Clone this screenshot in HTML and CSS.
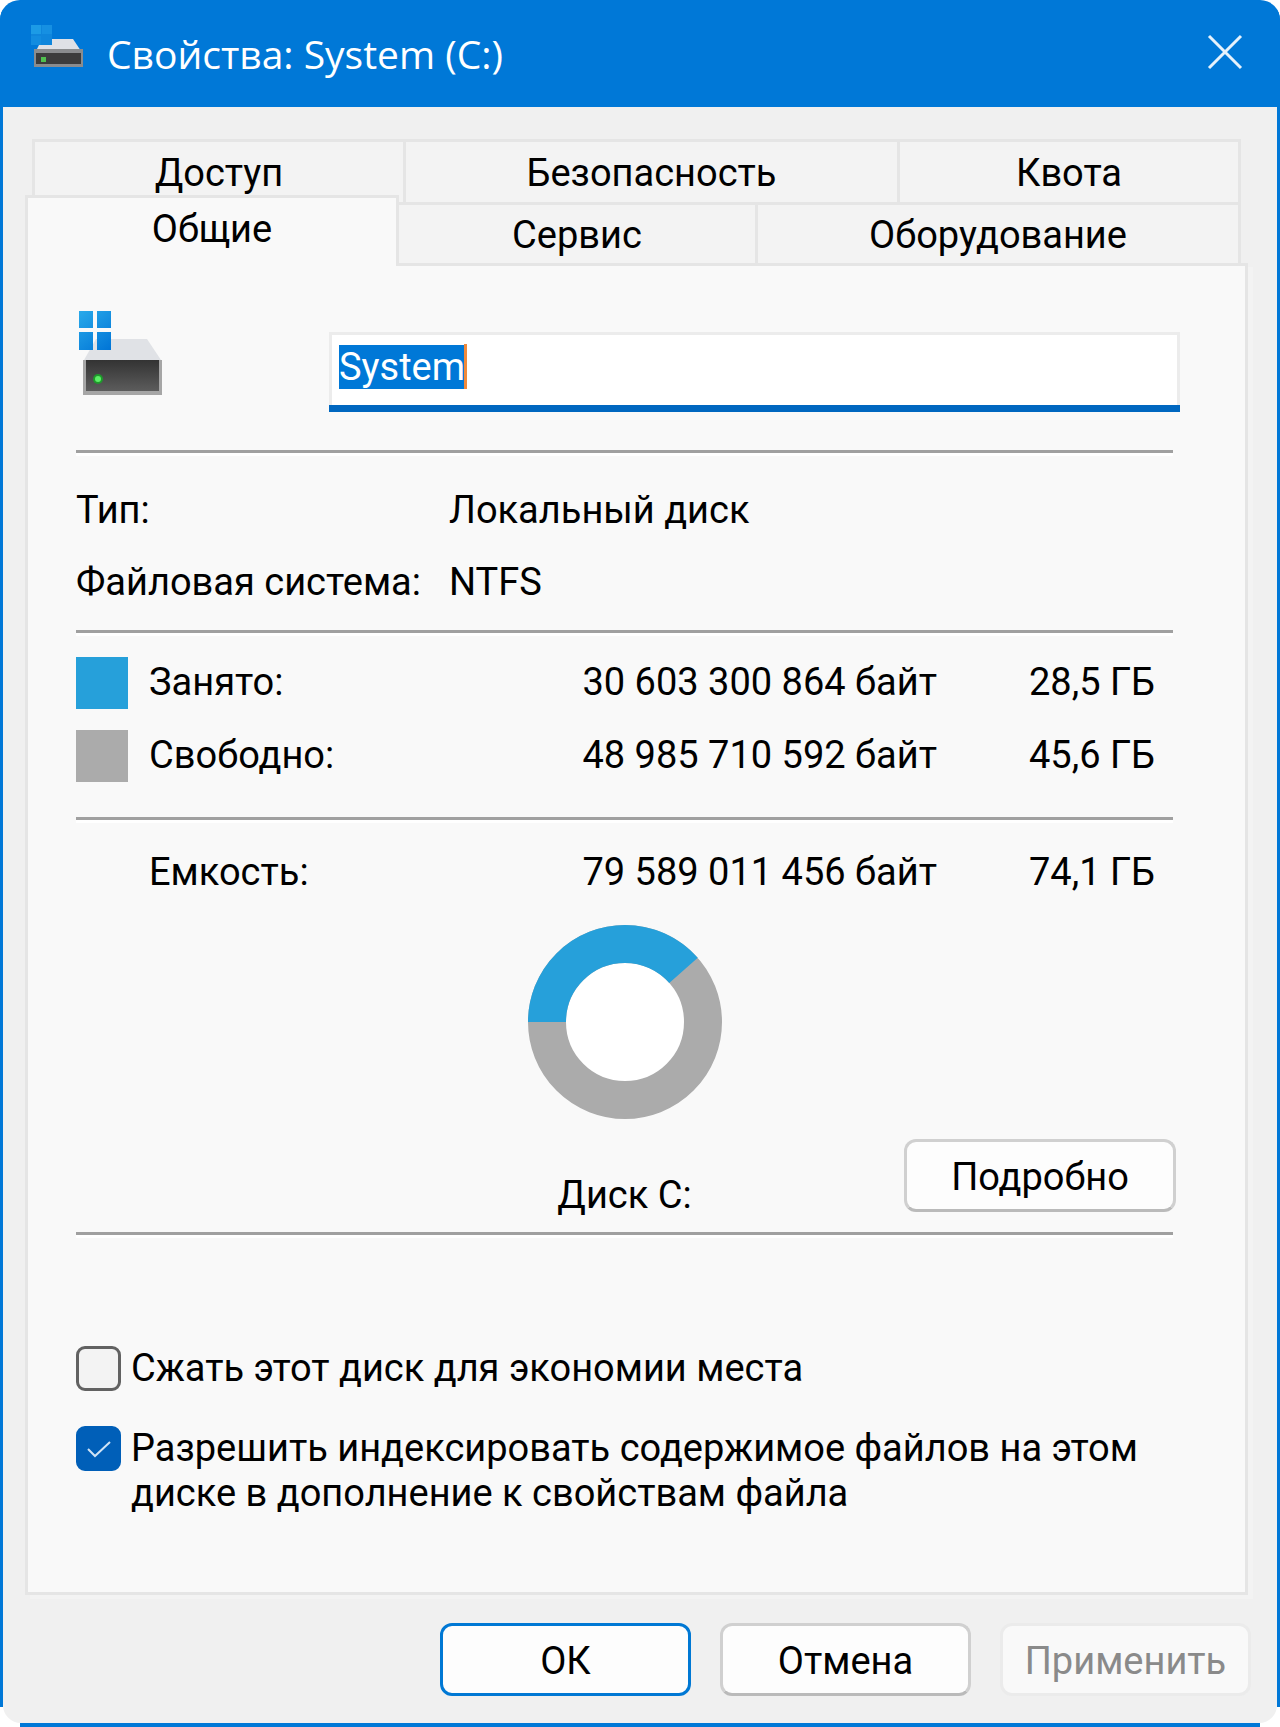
FILE: index.html
```html
<!DOCTYPE html>
<html lang="ru">
<head>
<meta charset="utf-8">
<title>Свойства: System (C:)</title>
<link rel="stylesheet" href="styles.css">
</head>

<body>
  <div class="window">
    <header class="titlebar">
      <svg class="titleIcon" viewBox="0 0 52 42">
        <path d="M11 14h31l8 12H5z" fill="#dfe1e6"/>
        <rect x="0" y="0" width="21" height="20" fill="#0f86dc"/>
        <rect x="0" y="0" width="10" height="9" fill="#1c9be6"/>
        <rect x="11" y="0" width="10" height="9" fill="#1690e2"/>
        <rect x="0" y="11" width="10" height="9" fill="#128ce0"/>
        <rect x="3" y="24" width="49" height="18" fill="#8a8c8e"/>
        <rect x="5" y="28" width="45" height="11" fill="#3c3c3c"/>
        <rect x="10" y="32" width="5" height="5" fill="#4fc04f"/>
      </svg>
      <h1>Свойства: System (C:)</h1>
      <button class="close" aria-label="Закрыть">
        <svg viewBox="0 0 36 36"><path d="M2 2L34 34M34 2L2 34"/></svg>
      </button>
    </header>

    <main class="client">
      <nav class="tabs">
        <div class="tabRow back">
          <button class="tab t1">Доступ</button>
          <button class="tab t2">Безопасность</button>
          <button class="tab t3">Квота</button>
        </div>
        <div class="tabRow front">
          <button class="tab active">Общие</button>
          <button class="tab t4">Сервис</button>
          <button class="tab t5">Оборудование</button>
        </div>
      </nav>

      <section class="panel">
        <div class="volume">
          <svg class="driveIcon" viewBox="0 0 86 84">
            <defs>
              <linearGradient id="win" x1="3" y1="0" x2="35" y2="39" gradientUnits="userSpaceOnUse">
                <stop offset="0" stop-color="#2aaaea"/>
                <stop offset="1" stop-color="#0074d6"/>
              </linearGradient>
              <linearGradient id="box" x1="0" y1="0" x2="0" y2="1">
                <stop offset="0" stop-color="#333"/>
                <stop offset="1" stop-color="#5c5c5c"/>
              </linearGradient>
            </defs>
            <path d="M20 28H71L85 49H8z" fill="#e0e2e6"/>
            <rect x="7" y="49" width="80" height="35" fill="#a6a6a6"/>
            <rect x="10" y="49" width="73" height="31" fill="url(#box)"/>
            <circle cx="22" cy="68" r="5" fill="#1f9a2c"/>
            <circle cx="22" cy="68" r="3" fill="#5cf066"/>
            <path d="M3 0h14v17h-14zM21 0h14v17h-14zM3 21h14v18h-14zM21 21h14v18h-14z" fill="url(#win)"/>
          </svg>
          <div class="nameBox">
            <input type="text" id="volumeName" value="System" aria-label="Метка тома" autofocus>
            <span class="caret"></span>
          </div>
        </div>

        <hr>

        <dl class="info">
          <dt>Тип:</dt><dd>Локальный диск</dd>
          <dt>Файловая система:</dt><dd>NTFS</dd>
        </dl>

        <hr>

        <table class="usage">
          <tr>
            <td class="key"><span class="swatch used"></span></td>
            <th>Занято:</th>
            <td>30 603 300 864 байт</td>
            <td class="gb">28,5 ГБ</td>
          </tr>
          <tr>
            <td class="key"><span class="swatch free"></span></td>
            <th>Свободно:</th>
            <td>48 985 710 592 байт</td>
            <td class="gb">45,6 ГБ</td>
          </tr>
        </table>

        <hr>

        <table class="capacity">
          <tr>
            <td class="key"></td>
            <th>Емкость:</th>
            <td>79 589 011 456 байт</td>
            <td class="gb">74,1 ГБ</td>
          </tr>
        </table>

        <!-- ring: used part starts at 9 o'clock and goes clockwise -->
        <svg class="ring" viewBox="0 0 196 196">
          <circle cx="98" cy="98" r="60" fill="#fff"/>
          <circle cx="98" cy="98" r="78" fill="none" stroke="#ababab" stroke-width="38"/>
          <circle cx="98" cy="98" r="78" fill="none" stroke="#26a0da" stroke-width="38" pathLength="1000" stroke-dasharray="385 615" transform="rotate(180 98 98)"/>
        </svg>

        <div class="diskRow">
          <span class="diskName">Диск C:</span>
          <button class="btn details">Подробно</button>
        </div>

        <hr>

        <div class="options">
          <label class="option">
            <input type="checkbox">
            <span>Сжать этот диск для экономии места</span>
          </label>
          <label class="option">
            <input type="checkbox" checked>
            <span>Разрешить индексировать содержимое файлов на этом<br>диске в дополнение к свойствам файла</span>
          </label>
        </div>
      </section>

      <footer class="buttons">
        <button class="btn default">ОК</button>
        <button class="btn">Отмена</button>
        <button class="btn" disabled>Применить</button>
      </footer>
    </main>
  </div>

<script>
  var field = document.getElementById("volumeName");
  field.focus();
  field.select();
</script>
</body>
</html>
```
FILE: styles.css
```css
* {
  box-sizing: border-box;
}

body {
  margin: 0;
  background: #fff;
  color: #000;
  font-family: Roboto, "Liberation Sans", sans-serif;
  font-size: 38px;
  line-height: 45px;
}

button, input {
  font: inherit;
  color: inherit;
  margin: 0;
}

/* the frame lines stop short of the rounded bottom corners */
.window {
  display: flex;
  flex-direction: column;
  min-height: 100vh;
  padding-bottom: 4px;
  background:
    linear-gradient(#0078d7, #0078d7) left top / 3px calc(100% - 20px) no-repeat,
    linear-gradient(#0078d7, #0078d7) right top / 3px calc(100% - 20px) no-repeat,
    linear-gradient(#0078d7, #0078d7) center bottom / calc(100% - 40px) 4px no-repeat;
  border-radius: 20px 20px 0 0;
  overflow: hidden;
}

.titlebar {
  display: flex;
  align-items: center;
  height: 107px;
  padding: 0 37px 0 31px;
  background: #0078d7;
  color: #fff;
}

.titlebar h1 {
  flex: 1;
  margin: 0 0 0 24px;
  font-family: "Open Sans", "Noto Sans", sans-serif;
  font-size: 39px;
  font-weight: 400;
}

.titleIcon {
  width: 52px;
  height: 42px;
  margin-bottom: 16px;
}

.close {
  padding: 0 0 4px;
  border: 0;
  background: none;
}

.close svg {
  display: block;
  width: 36px;
  height: 36px;
  fill: none;
  stroke: #e6f2fc;
  stroke-width: 3;
}

.client {
  display: flex;
  flex-direction: column;
  flex: 1;
  margin: 0 3px;
  padding: 32px 29px 0 22px;
  background: #f0f0f0;
  border-radius: 0 0 18px 18px;
}

/* tabs */
.tabRow {
  display: flex;
}

.back {
  height: 63px;
  margin: 0 7px;
}

.front {
  height: 61px;
  margin-right: 7px;
}

.tab {
  flex: 1 1 0;
  padding: 3px 0 0;
  background: #f3f3f3;
  border: 3px solid #e5e5e5;
  border-width: 3px 0 0 3px;
}

.tab:last-child {
  border-right-width: 3px;
}

.t1 { flex-grow: 368; }
.t2 { flex-grow: 491; }
.t3 { flex-grow: 338; }
.t4 { flex-grow: 356; border-left-width: 0; }
.t5 { flex-grow: 480; }

.active {
  position: relative;
  flex-grow: 368;
  margin: -7px 0 -3px;
  padding: 0 0 6px;
  background: #f9f9f9;
  border-right-width: 3px;
  border-bottom: 0;
}

.panel {
  flex: 1;
  padding: 45px 72px 60px 48px;
  background: #f9f9f9;
  border: 3px solid #e5e5e5;
  box-shadow: 5px 4px 0 #f3f3f3;
}

hr {
  height: 6px;
  margin: 0;
  border: 0;
  border-top: 3px solid #a0a0a0;
  background: #fff;
}

/* volume name */
.volume {
  display: flex;
  align-items: flex-start;
  margin: 0 -7px 38px 0;
}

.driveIcon {
  width: 86px;
  height: 84px;
}

.nameBox {
  position: relative;
  flex: 1;
  margin: 21px 0 0 167px;
  border-bottom: 7px solid #0067c0;
}

.nameBox input {
  display: block;
  width: 100%;
  height: 73px;
  padding: 9px 7px 16px;
  border: 3px solid #ececec;
  border-bottom: 0;
  border-radius: 0;
  background: #fff;
  outline: none;
}

.nameBox input::selection {
  background: #0078d7;
  color: #fff;
}

.caret {
  position: absolute;
  left: 135px;
  top: 12px;
  width: 3px;
  height: 45px;
  background: #f08a3c;
}

.info {
  display: grid;
  grid-template-columns: 373px 1fr;
  row-gap: 27px;
  margin: 32px 0 25px;
}

.info dt {
  white-space: nowrap;
}

.info dd {
  margin: 0;
}

/* disk usage */
.usage, .capacity {
  width: calc(100% - 18px);
  border-collapse: collapse;
}

.usage {
  margin: 10px 0 25px;
}

.capacity {
  margin: 13px 0 15px;
}

.usage tr, .capacity tr {
  height: 73px;
}

td, th {
  padding: 0;
  font-weight: 400;
  text-align: right;
}

th {
  text-align: left;
}

.key {
  width: 73px;
}

.gb {
  width: 218px;
}

.swatch {
  display: block;
  width: 52px;
  height: 52px;
}

.used { background: #26a0da; }
.free { background: #ababab; }

.ring {
  display: block;
  width: 196px;
  height: 196px;
  margin: 0 auto;
}

.diskRow {
  display: grid;
  grid-template-columns: 1fr auto 1fr;
  height: 79px;
  margin: 19px 0 14px;
}

.diskName {
  grid-column: 2;
  align-self: end;
}

.details {
  justify-self: end;
  margin-right: -3px;
}

.btn {
  width: 251px;
  height: 73px;
  padding: 3px 0 0;
  background: #fdfdfd;
  border: 3px solid #d0d0d0;
  border-bottom-color: #bababa;
  border-radius: 12px;
}

.btn.details {
  width: 272px;
}

.btn.default {
  border-color: #0078d4;
}

.btn:disabled {
  background: #f9f9f9;
  border-color: #ebebeb;
  color: #8a8a8a;
}

/* check boxes */
.options {
  display: grid;
  row-gap: 35px;
  margin-top: 108px;
}

.option {
  display: flex;
  gap: 10px;
}

.option span {
  white-space: nowrap;
}

.option input {
  flex: none;
  appearance: none;
  width: 45px;
  height: 45px;
  border: 3px solid #626262;
  border-radius: 9px;
  background: #f3f3f3;
}

.option input:checked {
  border-color: #005fb8;
  background: #005fb8 url("data:image/svg+xml,%3Csvg xmlns='http://www.w3.org/2000/svg' viewBox='0 0 39 39'%3E%3Cpath d='M9 20l7 7L31 13' fill='none' stroke='%23cfe3f5' stroke-width='2'/%3E%3C/svg%3E") center / 39px no-repeat;
}

.buttons {
  display: flex;
  justify-content: flex-end;
  gap: 29px;
  margin-right: -3px;
  padding: 28px 0 27px;
}
```
